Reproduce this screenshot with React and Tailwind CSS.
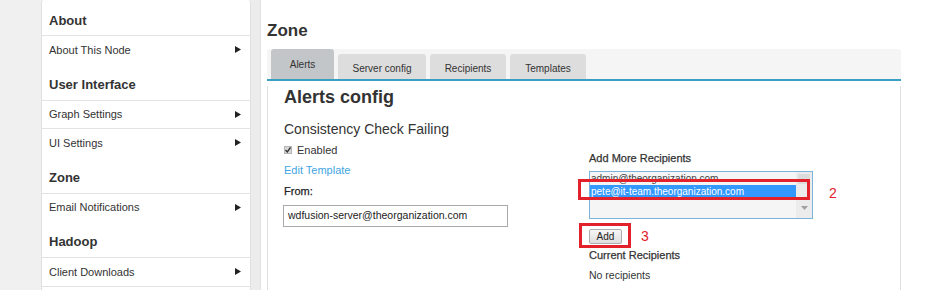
import React from 'react';

const font = { fontFamily: '"Liberation Sans", Arial, sans-serif' };

function Arrow() {
  return (
    <svg width="6" height="7" viewBox="0 0 6 7" className="mr-[9px]">
      <polygon points="0,0 6,3.5 0,7" fill="#222" />
    </svg>
  );
}

function SideHeading({ children, first }) {
  return (
    <div className={`${first ? 'h-[35px] pb-[7px]' : 'h-[36px] pb-[8px]'} flex items-end px-[7px] text-[13px] leading-[15px] font-bold text-[#333]`}>
      {children}
    </div>
  );
}

function SideItem({ children }) {
  return (
    <div className="h-[28.5px] border-t border-[#e3e3e3] flex items-center justify-between pl-[7px] text-[11px] text-[#333]">
      <span>{children}</span>
      {children && <Arrow />}
    </div>
  );
}

function Tab({ label, active }) {
  return active ? (
    <div className="h-[30px] w-[63px] rounded-t-[3px] bg-[#c3c6c8] flex items-center justify-center text-[10px] text-[#333]">
      {label}
    </div>
  ) : (
    <div className="h-[25px] rounded-t-[3px] bg-[#dddddd] flex items-center justify-center pt-[3px] text-[10px] text-[#333]" style={{ width: label.w }}>
      {label.t}
    </div>
  );
}

export default function App() {
  return (
    <div className="flex h-[290px] w-[950px] overflow-hidden bg-[#f0f0f0]" style={font}>
      <div className="w-[41px] shrink-0" />

      {/* sidebar */}
      <div className="w-[210px] shrink-0 bg-white border-x border-[#e0e0e0] rounded-t-[3px]">
        <SideHeading first>About</SideHeading>
        <SideItem>About This Node</SideItem>
        <SideHeading>User Interface</SideHeading>
        <SideItem>Graph Settings</SideItem>
        <SideItem>UI Settings</SideItem>
        <SideHeading>Zone</SideHeading>
        <SideItem>Email Notifications</SideItem>
        <SideHeading>Hadoop</SideHeading>
        <SideItem>Client Downloads</SideItem>
        <SideItem />
      </div>

      <div className="w-[10px] shrink-0 bg-[#ececec] border-r border-[#e2e2e2]" />

      {/* main */}
      <div className="flex-1 bg-white pl-[6px] pt-[21px]">
        <h1 className="text-[17px] leading-[20px] font-bold text-[#333]">Zone</h1>

        <div className="mt-[8px] w-[634px]">
          <div className="h-[32px] bg-[#f5f5f5] rounded-t-[3px] border-b-2 border-[#3aa0c2] flex items-end gap-[4px] pl-[4px]">
            <Tab label="Alerts" active />
            <Tab label={{ t: 'Server config', w: 88 }} />
            <Tab label={{ t: 'Recipients', w: 76 }} />
            <Tab label={{ t: 'Templates', w: 76 }} />
          </div>

          <div className="h-[220px] border-x border-[#dedede] pl-[16px] text-[#333]">
            <h2 className="mt-[5px] text-[18px] leading-[22px] font-bold">Alerts config</h2>

            <div className="flex">
              <div className="w-[305px] shrink-0">
                <h3 className="mt-[13px] text-[14px] leading-[16px]">Consistency Check Failing</h3>

                <label className="mt-[6px] flex items-center h-[14px] text-[11px]">
                  <span className="w-[8px] h-[8px] bg-[#d8d8d8] border border-[#b5b5b5] flex items-center justify-center mr-[5px]">
                    <svg width="6" height="6" viewBox="0 0 6 6">
                      <path d="M0.5 3 L2.3 5 L5.5 0.5" stroke="#333" strokeWidth="1.3" fill="none" />
                    </svg>
                  </span>
                  Enabled
                </label>

                <div className="mt-[6px] h-[14px] leading-[14px] text-[11px] text-[#3ea5e2]">Edit Template</div>

                <div className="mt-[7px] h-[14px] leading-[14px] text-[11px] text-[#222]" style={{ WebkitTextStroke: '0.25px #222' }}>From:</div>

                <div className="mt-[7px] -ml-[1px] w-[225px] h-[22px] border border-[#a9a9a9] flex items-center pl-[4px] text-[10.5px] text-[#222]">
                  wdfusion-server@theorganization.com
                </div>
              </div>

              <div className="pt-[43px] text-[11px]">
                <div className="h-[14px] leading-[14px] text-[#333]" style={{ WebkitTextStroke: '0.25px #333' }}>Add More Recipients</div>

                <div className="relative mt-[6px]">
                  <div className="w-[224px] h-[48px] border border-[#7ab4da] bg-[#f5f5f5] flex">
                    <div className="flex-1 pt-[1px] text-[10px] leading-[12px]">
                      <div className="h-[12px] pl-[1px] text-[#444]">admin@theorganization.com</div>
                      <div className="h-[13px] pl-[1px] bg-[#3399ff] text-white flex items-center">pete@it-team.theorganization.com</div>
                    </div>
                    <div className="w-[16px] bg-[#ececec] flex flex-col justify-between items-center py-[2px]">
                      <div className="w-[12px] h-[10px] bg-[#dcdcdc]" />
                      <svg width="7" height="4" viewBox="0 0 7 4" className="mb-[6px]">
                        <polygon points="0,0 7,0 3.5,4" fill="#a0a0a0" />
                      </svg>
                    </div>
                  </div>
                  <div className="absolute left-[-11px] top-[8px] w-[232px] h-[21px] border-[3px] border-[#e3212a]" />
                  <span className="absolute left-[240px] top-[14px] text-[14px] leading-[16px] text-[#e3212a]">2</span>
                </div>

                <div className="relative mt-[9px] h-[15px]">
                  <button className="w-[33px] h-[15px] rounded-[2px] border border-[#adadad] bg-gradient-to-b from-[#f6f6f6] to-[#dedede] text-[10px] leading-[13px] text-[#222]">
                    Add
                  </button>
                  <div className="absolute left-[-10px] top-[-5px] w-[52px] h-[25px] border-[3px] border-[#e3212a]" />
                  <span className="absolute left-[52px] top-[0px] text-[14px] leading-[16px] text-[#e3212a]">3</span>
                </div>

                <div className="mt-[5px] h-[14px] leading-[14px] text-[#333]" style={{ WebkitTextStroke: '0.25px #333' }}>Current Recipients</div>
                <div className="mt-[6px] h-[14px] leading-[14px] text-[10.5px] text-[#333]">No recipients</div>
              </div>
            </div>
          </div>
        </div>
      </div>
    </div>
  );
}
